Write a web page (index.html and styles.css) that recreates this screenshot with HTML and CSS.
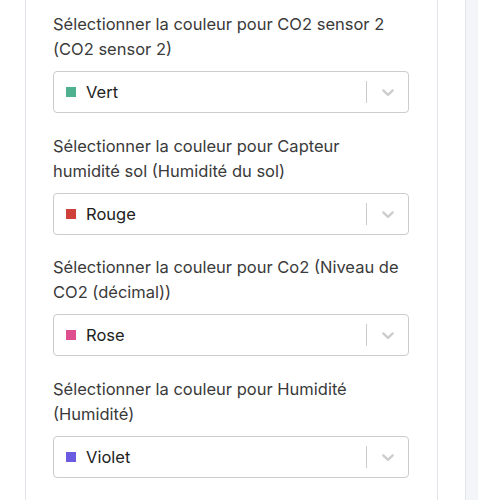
FILE: index.html
```html
<!DOCTYPE html>
<html lang="fr">
<head>
    <meta charset="UTF-8">
    <meta name="viewport" content="width=device-width, initial-scale=1.0">
    <title>Couleurs des capteurs</title>
<link rel="stylesheet" href="styles.css">
</head>
<body>
    <div class="page">
        <div class="card">
            <!-- CO2 sensor 2 -->
            <div class="field">
                <label class="field-label">Sélectionner la couleur pour CO2 sensor 2 (CO2 sensor 2)</label>
                <div class="select">
                    <div class="select-value">
                        <span class="swatch swatch-green"></span>
                        <span>Vert</span>
                    </div>
                    <span class="select-sep"></span>
                    <div class="select-arrow">
                        <svg viewBox="0 0 20 20" width="20" height="20"><path d="M4.516 7.548c0.436-0.446 1.043-0.481 1.576 0l3.908 3.747 3.908-3.747c0.533-0.481 1.141-0.446 1.574 0 0.436 0.445 0.408 1.197 0 1.615-0.406 0.418-4.695 4.502-4.695 4.502-0.217 0.223-0.502 0.335-0.787 0.335s-0.57-0.112-0.789-0.335c0 0-4.287-4.084-4.695-4.502s-0.436-1.17 0-1.615z"/></svg>
                    </div>
                </div>
            </div>

            <!-- Capteur humidité sol -->
            <div class="field">
                <label class="field-label">Sélectionner la couleur pour Capteur humidité sol (Humidité du sol)</label>
                <div class="select">
                    <div class="select-value">
                        <span class="swatch swatch-red"></span>
                        <span>Rouge</span>
                    </div>
                    <span class="select-sep"></span>
                    <div class="select-arrow">
                        <svg viewBox="0 0 20 20" width="20" height="20"><path d="M4.516 7.548c0.436-0.446 1.043-0.481 1.576 0l3.908 3.747 3.908-3.747c0.533-0.481 1.141-0.446 1.574 0 0.436 0.445 0.408 1.197 0 1.615-0.406 0.418-4.695 4.502-4.695 4.502-0.217 0.223-0.502 0.335-0.787 0.335s-0.57-0.112-0.789-0.335c0 0-4.287-4.084-4.695-4.502s-0.436-1.17 0-1.615z"/></svg>
                    </div>
                </div>
            </div>

            <!-- Co2 -->
            <div class="field">
                <label class="field-label">Sélectionner la couleur pour Co2 (Niveau de CO2 (décimal))</label>
                <div class="select">
                    <div class="select-value">
                        <span class="swatch swatch-pink"></span>
                        <span>Rose</span>
                    </div>
                    <span class="select-sep"></span>
                    <div class="select-arrow">
                        <svg viewBox="0 0 20 20" width="20" height="20"><path d="M4.516 7.548c0.436-0.446 1.043-0.481 1.576 0l3.908 3.747 3.908-3.747c0.533-0.481 1.141-0.446 1.574 0 0.436 0.445 0.408 1.197 0 1.615-0.406 0.418-4.695 4.502-4.695 4.502-0.217 0.223-0.502 0.335-0.787 0.335s-0.57-0.112-0.789-0.335c0 0-4.287-4.084-4.695-4.502s-0.436-1.17 0-1.615z"/></svg>
                    </div>
                </div>
            </div>

            <!-- Humidité -->
            <div class="field">
                <label class="field-label">Sélectionner la couleur pour Humidité (Humidité)</label>
                <div class="select">
                    <div class="select-value">
                        <span class="swatch swatch-violet"></span>
                        <span>Violet</span>
                    </div>
                    <span class="select-sep"></span>
                    <div class="select-arrow">
                        <svg viewBox="0 0 20 20" width="20" height="20"><path d="M4.516 7.548c0.436-0.446 1.043-0.481 1.576 0l3.908 3.747 3.908-3.747c0.533-0.481 1.141-0.446 1.574 0 0.436 0.445 0.408 1.197 0 1.615-0.406 0.418-4.695 4.502-4.695 4.502-0.217 0.223-0.502 0.335-0.787 0.335s-0.57-0.112-0.789-0.335c0 0-4.287-4.084-4.695-4.502s-0.436-1.17 0-1.615z"/></svg>
                    </div>
                </div>
            </div>
        </div>
        <div class="side"></div>
    </div>
</body>
</html>
```

FILE: styles.css
```css
body {
    margin: 0;
    background: #fff;
    font-family: Inter, "Noto Sans", sans-serif;
    color: #333;
    overflow: hidden;
}
.page {
    display: flex;
    height: 500px;
    padding-left: 25px;
}
.card {
    width: 356px;
    padding: 12px 28px 0 27px;
    border-left: 1px solid #e3e4ea;
    border-right: 1px solid #e3e4ea;
    display: flex;
    flex-direction: column;
    gap: 20.5px;
}
.side {
    margin-left: 27px;
    flex: 1;
    background: #f4f5f9;
    border-left: 1px solid #e3e5ec;
}
.field-label {
    display: block;
    padding-right: 6px;
    font-size: 16.5px;
    line-height: 25px;
    margin-bottom: 9px;
    color: #3a3a3a;
}
.select {
    display: flex;
    align-items: stretch;
    height: 40px;
    border: 1px solid #ccc;
    border-radius: 4px;
    background: #fff;
}
.select-value {
    flex: 1;
    display: flex;
    align-items: center;
    gap: 10px;
    padding-left: 12px;
    font-size: 16.5px;
    color: #222;
}
.swatch {
    width: 10px;
    height: 10px;
}
.swatch-green { background: #4fb18f; }
.swatch-red { background: #d0403b; }
.swatch-pink { background: #de4f8f; }
.swatch-violet { background: #6a5be0; }
.select-sep {
    width: 1px;
    margin: 9px 0;
    background: #ccc;
}
.select-arrow {
    width: 41px;
    display: flex;
    align-items: center;
    justify-content: center;
}
.select-arrow svg {
    fill: #ccc;
}
```
